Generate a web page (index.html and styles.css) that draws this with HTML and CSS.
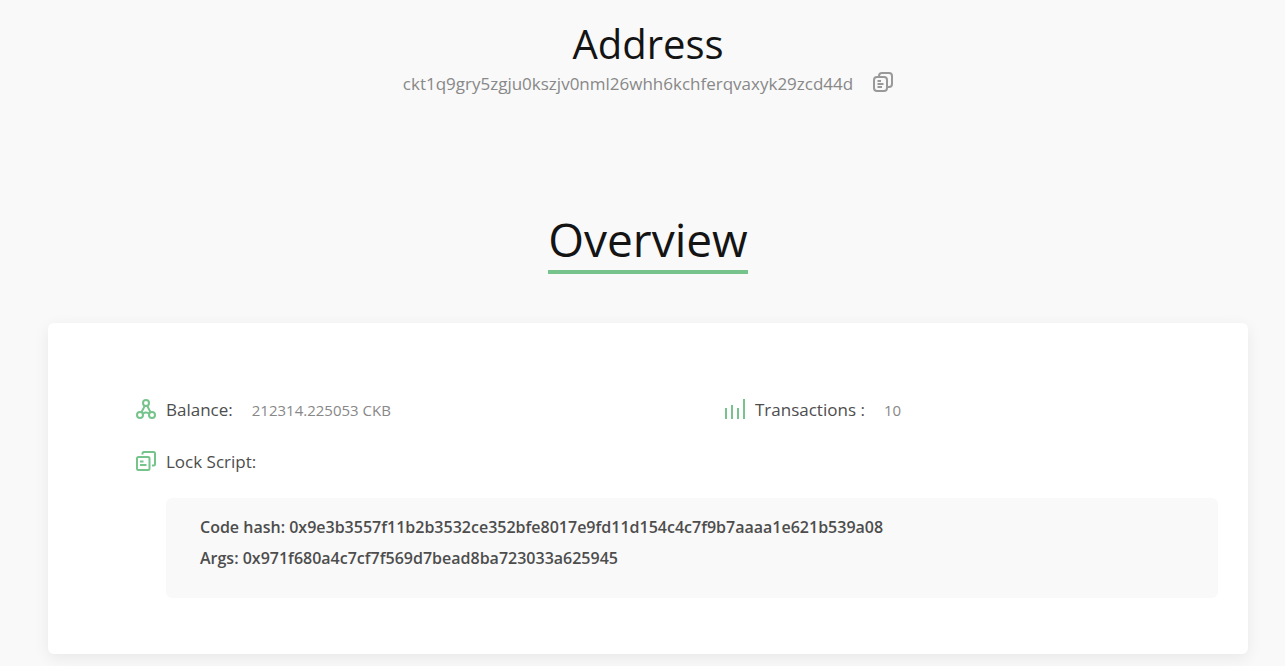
FILE: index.html
```html
<!DOCTYPE html>
<html lang="en">
<head>
  <meta charset="utf-8">
  <meta name="viewport" content="width=device-width, initial-scale=1.0">
  <title>Address</title>
  <link rel="stylesheet" href="styles.css">
</head>
<body>
  <main class="content">
    <header class="address">
      <h1>Address</h1>
      <div class="address_hash">
        <span>ckt1q9gry5zgju0kszjv0nml26whh6kchferqvaxyk29zcd44d</span>
        <button class="copy" type="button" aria-label="Copy address">
          <svg class="icon" viewBox="0 0 20 20">
            <rect x="1" y="5" width="13" height="14" rx="3"/>
            <path d="M6 4.500V4a3 3 0 0 1 3-3h7a3 3 0 0 1 3 3v8a3 3 0 0 1-3 3h-1M4.500 9h3.500M4.500 12h6M4.500 15h4.500"/>
          </svg>
        </button>
      </div>
    </header>

    <h2 class="overview_title">Overview</h2>

    <section class="card">
      <div class="item">
        <svg class="icon" viewBox="0 0 20 20">
          <circle cx="10" cy="4" r="3"/>
          <circle cx="4" cy="16" r="3"/>
          <circle cx="16" cy="16" r="3"/>
          <path d="M8.800 6.800L5.500 13.200M11.200 6.800l3.300 6.400M7 14.500c1.800-1.300 4.200-1.300 6 0"/>
        </svg>
        <span class="label">Balance:</span>
        <span class="value">212314.225053 CKB</span>
      </div>
      <div class="item">
        <svg class="icon" viewBox="0 0 20 20">
          <path d="M1 9v11M7 6v14M13 9v11M19 0v20"/>
        </svg>
        <span class="label">Transactions :</span>
        <span class="value">10</span>
      </div>
      <div class="item">
        <svg class="icon" viewBox="0 0 20 20">
          <rect x="1" y="6" width="12.500" height="13" rx="1.500"/>
          <path d="M6.500 3.500V2.500A1.500 1.500 0 0 1 8 1h9.500A1.500 1.500 0 0 1 19 2.500v10.500a1.500 1.500 0 0 1-1.500 1.500H16M4 10.500h3.500M4 14h6.500"/>
        </svg>
        <span class="label">Lock Script:</span>
      </div>
      <div class="script">
        <div>Code hash: 0x9e3b3557f11b2b3532ce352bfe8017e9fd11d154c4c7f9b7aaaa1e621b539a08</div>
        <div>Args: 0x971f680a4c7cf7f569d7bead8ba723033a625945</div>
      </div>
    </section>
  </main>
</body>
</html>
```
FILE: styles.css
```css
body {
  margin: 0;
  background: #f9f9f9;
  font-family: "Segoe UI", "Open Sans", "Noto Sans", sans-serif;
  color: #4d4d4d;
}

.content {
  padding: 16px 37px 12px 48px;
}

.address {
  text-align: center;
}

h1 {
  margin: 0;
  font-size: 40px;
  line-height: 56px;
  font-weight: 400;
  color: #141414;
}

.address_hash {
  display: flex;
  justify-content: center;
  align-items: center;
  gap: 20px;
  line-height: 24px;
  font-size: 17px;
  color: #888888;
}

.copy {
  padding: 0 0 4px;
  border: 0;
  background: none;
  color: #999999;
  line-height: 0;
  cursor: pointer;
}

.icon {
  flex: none;
  width: 20px;
  height: 20px;
  fill: none;
  stroke: currentColor;
  stroke-width: 2;
}

.overview_title {
  width: fit-content;
  margin: 112px auto 49px;
  border-bottom: 4px solid #76c38c;
  font-size: 46px;
  line-height: 62px;
  font-weight: 400;
  color: #141414;
}

.card {
  display: grid;
  grid-template-columns: 1fr 1fr;
  column-gap: 96px;
  row-gap: 28px;
  padding: 75px 30px 56px 88px;
  border-radius: 6px;
  background: #ffffff;
  box-shadow: 0 4px 16px rgba(0, 0, 0, 0.07);
}

.item {
  display: flex;
  align-items: center;
  gap: 10px;
  line-height: 24px;
}

.item .icon {
  padding-bottom: 2px;
  color: #76c38c;
}

.label {
  font-size: 17px;
}

.value {
  margin-left: 9px;
  font-size: 15px;
  color: #888888;
}

.script {
  grid-column: 1 / -1;
  margin: -4px 0 0 30px;
  padding: 14px 34px 24px;
  border-radius: 6px;
  background: #f9f9f9;
  font-size: 16px;
  line-height: 31px;
  font-weight: 600;
  overflow-wrap: anywhere;
}
```
